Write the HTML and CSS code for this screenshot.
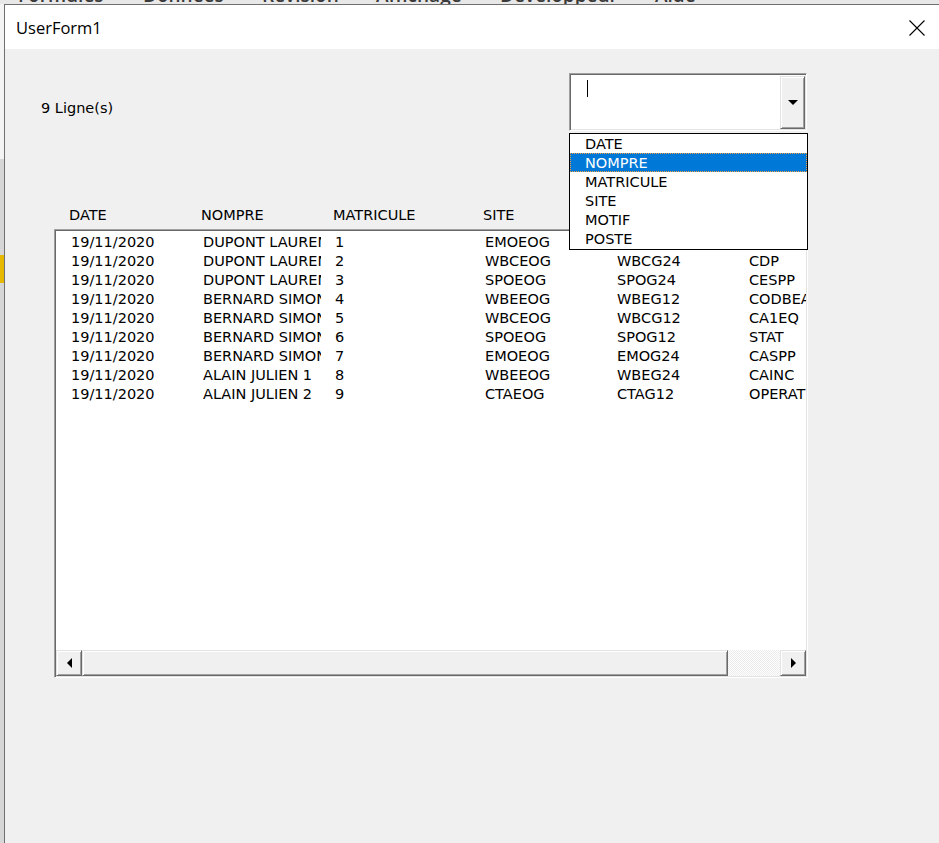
FILE: index.html
```html
<!DOCTYPE html>
<html lang="fr">
<head>
<meta charset="utf-8">
<title>UserForm1</title>
<link rel="stylesheet" href="styles.css">
</head>
<body>
<div class="desktop">
  <div class="ribbon">
    <span class="tab t1">Formules</span>
    <span class="tab t2">Données</span>
    <span class="tab t3">Révision</span>
    <span class="tab t4">Affichage</span>
    <span class="tab t5">Développeur</span>
    <span class="tab t6">Aide</span>
  </div>
  <div class="sheet-edge"></div>
  <div class="window">
    <div class="titlebar">
      <span class="title">UserForm1</span>
      <div class="close">
        <svg width="16" height="16" viewBox="0 0 16 16"><path d="M0.5 0.5 L15.5 15.5 M15.5 0.5 L0.5 15.5" stroke="#000" stroke-width="1.1" fill="none"/></svg>
      </div>
    </div>
    <div class="client">
      <div class="toprow">
        <div class="count">9 Ligne(s)</div>
        <div class="combo-wrap">
          <div class="combo">
            <div class="combo-field"><span class="caret"></span></div>
            <div class="combo-btn"><span class="arrow-down"></span></div>
          </div>
          <ul class="dropdown">
            <li>DATE</li>
            <li class="selected">NOMPRE</li>
            <li>MATRICULE</li>
            <li>SITE</li>
            <li>MOTIF</li>
            <li>POSTE</li>
          </ul>
        </div>
      </div>
      <div class="headers">
        <span class="h c1">DATE</span>
        <span class="h c2">NOMPRE</span>
        <span class="h c3">MATRICULE</span>
        <span class="h c4">SITE</span>
        <span class="h c5">MOTIF</span>
        <span class="h c6">POSTE</span>
      </div>
      <div class="listbox">
        <div class="rows">
          <div class="row"><span class="cell c1">19/11/2020</span><span class="cell c2">DUPONT LAURENT</span><span class="cell c3">1</span><span class="cell c4">EMOEOG</span><span class="cell c5">EMOG12</span><span class="cell c6">OPERAT</span></div>
          <div class="row"><span class="cell c1">19/11/2020</span><span class="cell c2">DUPONT LAURENT</span><span class="cell c3">2</span><span class="cell c4">WBCEOG</span><span class="cell c5">WBCG24</span><span class="cell c6">CDP</span></div>
          <div class="row"><span class="cell c1">19/11/2020</span><span class="cell c2">DUPONT LAURENT</span><span class="cell c3">3</span><span class="cell c4">SPOEOG</span><span class="cell c5">SPOG24</span><span class="cell c6">CESPP</span></div>
          <div class="row"><span class="cell c1">19/11/2020</span><span class="cell c2">BERNARD SIMON</span><span class="cell c3">4</span><span class="cell c4">WBEEOG</span><span class="cell c5">WBEG12</span><span class="cell c6">CODBEAT</span></div>
          <div class="row"><span class="cell c1">19/11/2020</span><span class="cell c2">BERNARD SIMON</span><span class="cell c3">5</span><span class="cell c4">WBCEOG</span><span class="cell c5">WBCG12</span><span class="cell c6">CA1EQ</span></div>
          <div class="row"><span class="cell c1">19/11/2020</span><span class="cell c2">BERNARD SIMON</span><span class="cell c3">6</span><span class="cell c4">SPOEOG</span><span class="cell c5">SPOG12</span><span class="cell c6">STAT</span></div>
          <div class="row"><span class="cell c1">19/11/2020</span><span class="cell c2">BERNARD SIMON</span><span class="cell c3">7</span><span class="cell c4">EMOEOG</span><span class="cell c5">EMOG24</span><span class="cell c6">CASPP</span></div>
          <div class="row"><span class="cell c1">19/11/2020</span><span class="cell c2">ALAIN JULIEN 1</span><span class="cell c3">8</span><span class="cell c4">WBEEOG</span><span class="cell c5">WBEG24</span><span class="cell c6">CAINC</span></div>
          <div class="row"><span class="cell c1">19/11/2020</span><span class="cell c2">ALAIN JULIEN 2</span><span class="cell c3">9</span><span class="cell c4">CTAEOG</span><span class="cell c5">CTAG12</span><span class="cell c6">OPERATEUR</span></div>
        </div>
        <div class="hscroll">
          <div class="sb-btn"><span class="arrow-left"></span></div>
          <div class="sb-thumb"></div>
          <div class="sb-track"></div>
          <div class="sb-btn"><span class="arrow-right"></span></div>
        </div>
      </div>
    </div>
  </div>
</div>
</body>
</html>
```

FILE: styles.css
```css
* { box-sizing: border-box; }

html, body {
  margin: 0;
  padding: 0;
  width: 939px;
  height: 843px;
  overflow: hidden;
  background: #e9e9e9;
}

.desktop {
  display: grid;
  grid-template-columns: 4px 1fr;
  grid-template-rows: 4px 1fr;
  width: 939px;
  height: 843px;
  overflow: hidden;
}

/* Excel ribbon peeking out above the dialog */
.ribbon {
  grid-column: 1 / 3;
  grid-row: 1;
  height: 4px;
  overflow: hidden;
  background: #e8e8e8;
  display: flex;
  padding-left: 18px;
  font-family: "Open Sans", "Noto Sans", sans-serif;
  font-size: 19px;
  font-weight: 600;
  line-height: 20px;
  color: #3a3a3a;
}
.ribbon .tab { display: block; margin-top: -15px; white-space: nowrap; }
.t1 { width: 125px; }
.t2 { width: 119px; }
.t3 { width: 114px; }
.t4 { width: 124px; }
.t5 { width: 155px; }
.t6 { width: 60px; }

.sheet-edge {
  grid-column: 1;
  grid-row: 2;
  background: linear-gradient(to bottom, #f4f4f4 0 155px, #d6d6d6 155px 251px, #e6b800 251px 279px, #d6d6d6 279px);
}

/* Dialog window */
.window {
  grid-column: 2;
  grid-row: 2;
  width: 936px;
  display: flex;
  flex-direction: column;
  border-left: 1px solid #707070;
  border-top: 1px solid #707070;
  background: #f0f0f0;
}

.titlebar {
  height: 44px;
  flex: none;
  background: #ffffff;
  display: flex;
  align-items: center;
  padding-left: 11px;
}
.title {
  font-family: "Open Sans", "Noto Sans", sans-serif;
  font-size: 16.5px;
  color: #000;
  margin-top: 1px;
}
.close {
  margin-left: auto;
  width: 46px;
  height: 44px;
  display: flex;
  align-items: center;
  justify-content: center;
  padding-top: 1px;
}
.close svg { display: block; }

.client {
  flex: 1;
  background: #f0f0f0;
  padding-top: 24px;
  font-family: "DejaVu Sans", "Liberation Sans", sans-serif;
  font-size: 14.5px;
  line-height: 19px;
  color: #000;
}

.toprow {
  display: grid;
  grid-template-columns: 528px 238px;
  margin-left: 36px;
}
.count { margin-top: 26px; }

.combo-wrap { position: relative; }

.combo {
  height: 58px;
  display: flex;
  border: 1px solid;
  border-color: #a0a0a0 #ffffff #ffffff #a0a0a0;
  box-shadow: inset 1px 1px 0 #696969, inset -1px -1px 0 #e3e3e3;
  padding: 1px;
  background: #fff;
}
.combo-field {
  flex: 1;
  padding: 5px 0 0 16px;
}
.caret {
  display: block;
  width: 1px;
  height: 17px;
  background: #000;
}
.combo-btn {
  width: 25px;
  margin-top: 1px;
  background: #f0f0f0;
  border: 1px solid;
  border-color: #e3e3e3 #696969 #696969 #e3e3e3;
  box-shadow: inset 1px 1px 0 #ffffff, inset -1px -1px 0 #a0a0a0;
  display: flex;
  align-items: center;
  justify-content: center;
}
.arrow-down {
  width: 0;
  height: 0;
  border-left: 5px solid transparent;
  border-right: 5px solid transparent;
  border-top: 5px solid #000;
}

.dropdown {
  position: absolute;
  top: 60px;
  left: 0;
  width: 239px;
  margin: 0;
  padding: 0 0 1px 0;
  list-style: none;
  background: #fff;
  border: 1px solid #000;
  z-index: 2;
}
.dropdown li {
  height: 19px;
  padding: 1px 0 0 15px;
  white-space: nowrap;
  overflow: hidden;
}
.dropdown li.selected {
  background: #0078d7;
  color: #ffffff;
  outline: 1px dotted #f0a040;
  outline-offset: -1px;
}

.headers {
  display: flex;
  margin: 75px 0 0 64px;
  height: 19px;
  white-space: nowrap;
}
.h { display: block; }
.headers .c1, .headers .c2, .headers .c4, .headers .c5 { width: 132px; }
.headers .c3 { width: 150px; }

.listbox {
  margin: 4px 0 0 49px;
  width: 754px;
  height: 449px;
  border: 1px solid;
  border-color: #a0a0a0 #ffffff #ffffff #a0a0a0;
  box-shadow: inset 1px 1px 0 #696969, inset -1px -1px 0 #e3e3e3;
  padding: 1px;
  background: #fff;
  display: flex;
  flex-direction: column;
}

.rows {
  flex: 1;
  overflow: hidden;
  padding-top: 2px;
}
.row {
  display: flex;
  height: 19px;
  padding-left: 15px;
  white-space: nowrap;
}
.cell {
  display: block;
  flex: none;
  overflow: hidden;
  margin-right: 13px;
}
.row .c1, .row .c2, .row .c4, .row .c5 { width: 119px; }
.row .c2 { width: 118px; margin-right: 14px; }
.row .c3 { width: 137px; }
.row .c6 { width: 119px; }

.hscroll {
  height: 26px;
  flex: none;
  display: flex;
}
.sb-btn, .sb-thumb {
  background: #f0f0f0;
  border: 1px solid;
  border-color: #e3e3e3 #696969 #696969 #e3e3e3;
  box-shadow: inset 1px 1px 0 #ffffff, inset -1px -1px 0 #a0a0a0;
}
.sb-btn {
  width: 26px;
  display: flex;
  align-items: center;
  justify-content: center;
}
.sb-thumb { width: 646px; }
.sb-track {
  flex: 1;
  background-color: #f0f0f0;
  background-image: repeating-conic-gradient(#ffffff 0 25%, #ebebeb 0 50%);
  background-size: 2px 2px;
}
.arrow-left {
  width: 0;
  height: 0;
  border-top: 5px solid transparent;
  border-bottom: 5px solid transparent;
  border-right: 5px solid #000;
}
.arrow-right {
  width: 0;
  height: 0;
  border-top: 5px solid transparent;
  border-bottom: 5px solid transparent;
  border-left: 5px solid #000;
}
```
